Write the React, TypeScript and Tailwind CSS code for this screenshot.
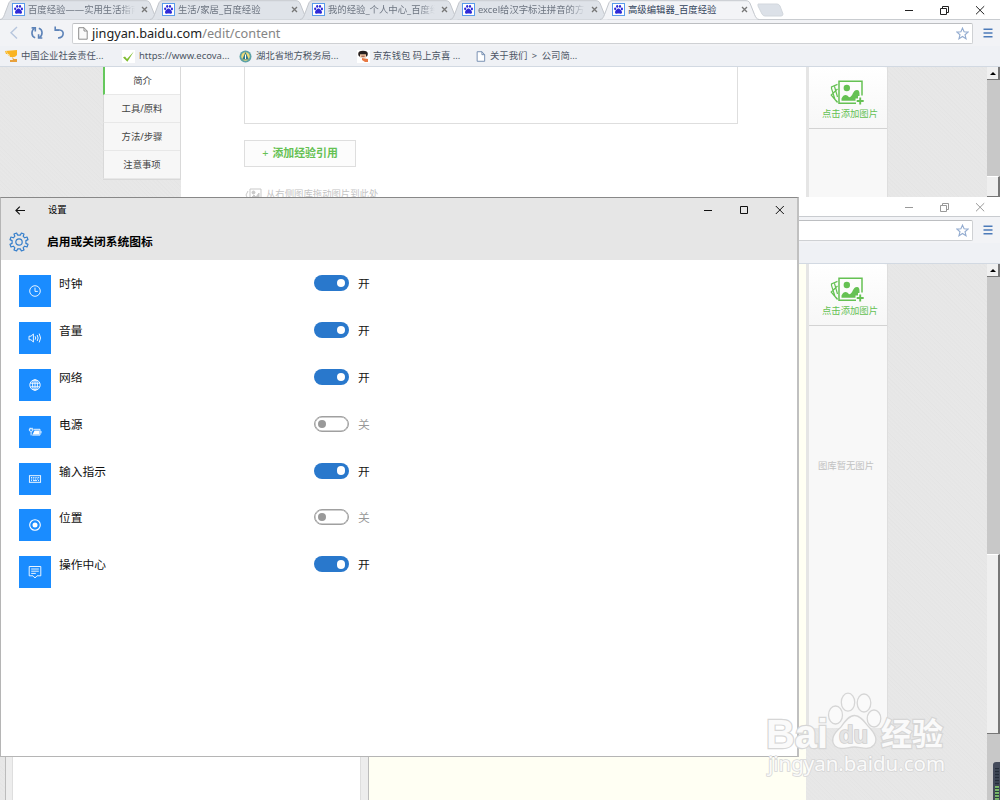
import type { ReactNode } from "react";

type Setting = {
  key: string;
  label: string;
  on: boolean;
  icon: ReactNode;
};

const TABS = ["百度经验——实用生活指南", "生活/家居_百度经验", "我的经验_个人中心_百度经验", "excel给汉字标注拼音的方法", "高级编辑器_百度经验"];

const NAV = ["简介", "工具/原料", "方法/步骤", "注意事项"];

const SETTINGS: Setting[] = [
  {
    key: "clock",
    label: "时钟",
    on: true,
    icon: (
      <>
        <circle cx="8" cy="8" r="5.3" />
        <path d="M8 4.6V8.4H10.8" />
      </>
    ),
  },
  {
    key: "volume",
    label: "音量",
    on: true,
    icon: (
      <>
        <path d="M2 6.2H4L6.4 4V12L4 9.8H2Z" />
        <path d="M8.2 6.3Q9.3 8 8.2 9.7M10.2 5Q12 8 10.2 11M12.2 3.6Q15 8 12.2 12.4" />
      </>
    ),
  },
  {
    key: "network",
    label: "网络",
    on: true,
    icon: (
      <>
        <circle cx="8" cy="8" r="5.2" />
        <ellipse cx="8" cy="8" rx="2.4" ry="5.2" />
        <path d="M8 2.8V13.2M3.3 6.2H12.7M3.3 9.8H12.7" />
      </>
    ),
  },
  {
    key: "power",
    label: "电源",
    on: false,
    icon: (
      <>
        <path d="M6.5 5.3H13V11.1H5.2M14 7V9.4" />
        <path d="M5.6 10.4L7.5 6.4H12.4V10.4Z" fill="white" stroke="none" />
        <path d="M2.4 4.9H5.8V6.7Q4.1 8.4 2.4 6.7ZM3.2 3.7V5M5 3.7V5M4.1 7.8V11.4" />
      </>
    ),
  },
  {
    key: "input",
    label: "输入指示",
    on: true,
    icon: (
      <>
        <rect x="2.4" y="4.7" width="11.2" height="6.6" />
        <path d="M4 6.5H12.2" strokeDasharray="1 .8" />
        <path d="M4 8H12.2" strokeDasharray="1.2 .7" />
        <path d="M4 9.6H5M6 9.6H10M11 9.6H12" />
      </>
    ),
  },
  {
    key: "location",
    label: "位置",
    on: false,
    icon: (
      <>
        <circle cx="8" cy="8" r="5.3" strokeWidth="1.1" />
        <circle cx="8" cy="8" r="2.5" fill="white" stroke="none" />
      </>
    ),
  },
  {
    key: "action",
    label: "操作中心",
    on: true,
    icon: (
      <>
        <path d="M2.2 2.5H13.8V11.8H10L8 14L6 11.8H2.2Z" />
        <path d="M4.2 5H11.8M4.2 7.2H11.8M4.2 9.4H8.8" />
      </>
    ),
  },
];

function PawIcon() {
  return (
    <svg viewBox="0 0 13 13" className="h-[13px] w-[13px] shrink-0">
      <rect x=".5" y=".5" width="12" height="12" fill="#fff" stroke="#5b9bea" />
      <g fill="#2f2bd8">
        <ellipse cx="3.2" cy="5.8" rx="1.1" ry="1.4" />
        <ellipse cx="5.2" cy="3.4" rx="1.1" ry="1.4" />
        <ellipse cx="8" cy="3.4" rx="1.1" ry="1.4" />
        <ellipse cx="9.9" cy="5.9" rx="1.1" ry="1.4" />
        <path d="M6.5 5.6C8 5.6 10 8.2 10 9.3C10 11.4 7.6 10.6 6.5 10.6S3 11.4 3 9.3C3 8.2 5 5.6 6.5 5.6Z" />
      </g>
    </svg>
  );
}

function Tab({ title, active }: { title: string; active: boolean }) {
  return (
    <div className="relative h-5 w-[150px] shrink-0">
      <svg viewBox="0 0 160 20" className="absolute top-0 left-0 h-5 w-40">
        <path
          d="M0 19.5C3 19 3.5 17 4.5 14.5L8.5 4C9.3 1.8 10 .7 12 .7H146C148.5 .7 149.5 2 150.3 4L154.5 14.5C155.5 17 156.5 19 159 19.5"
          fill={active ? "#f3f4f7" : "#dfe3e9"}
          stroke="#c3c7cd"
          strokeWidth="1"
        />
      </svg>
      <div className="relative flex h-5 items-center pl-[12px]">
        <PawIcon />
        <span
          className={
            "ml-[3px] w-[107px] overflow-hidden text-[9.37px] leading-5 whitespace-nowrap " +
            (active ? "text-[#34445c]" : "mask-r-from-85% text-[#6c7480]")
          }
        >
          {title}
        </span>
        <svg viewBox="0 0 7 7" className="ml-[6px] h-[7px] w-[7px]">
          <path d="M1 1L6 6M6 1L1 6" stroke="#777" strokeWidth="1.3" />
        </svg>
      </div>
    </div>
  );
}

function WindowButtons({ color }: { color: string }) {
  return (
    <svg viewBox="0 0 84 12" className="mr-[13px] h-3 w-[84px]" fill="none" stroke={color}>
      <path d="M2 6.5H10" />
      <path d="M37.5 4.5H43.5V10.5H37.5ZM39.5 4.5V2.5H45.5V8.5H43.5" />
      <path d="M73 2.2L81.2 10.3M81.2 2.2L73 10.3" />
    </svg>
  );
}

function Toolbar({ url }: { url?: boolean }) {
  return (
    <div className="flex h-[27px] items-center border-t border-[#c9ccd0] bg-[#f2f3f6]">
      <svg viewBox="0 0 72 20" className="h-5 w-[72px] shrink-0" fill="none">
        <path d="M17 4L11 9.7L17 15.5" stroke="#b7c6dd" strokeWidth="1.4" />
        <g stroke="#5d83b8" strokeWidth="1.6">
          <path d="M35.2 14.7C31 13.5 31 7.5 34.4 5.3M38.8 5.2C43 6.5 43 12.2 39.4 14.7" />
          <path d="M31.6 4.9H35.3V8.6M42.3 15H38.6V11.3" />
          <path d="M55.4 7H59.6C64.6 7 64.6 14.8 58 15" />
          <path d="M55.2 3.6V7.2H59" />
        </g>
      </svg>
      <div className="flex h-[21px] w-[901px] items-center rounded-[2px] border border-[#cfd1d4] border-t-[#bcbec1] bg-white">
        {url && (
          <>
            <svg viewBox="0 0 10 13" className="ml-[5px] h-[13px] w-[10px]" fill="#fafafa" stroke="#8d8d8d">
              <path d="M.7 .7H6L9.2 4V12.2H.7ZM6 .7V4H9.2" />
            </svg>
            <span className="-mt-px ml-1 text-[12.72px] leading-5 text-[#222]">
              jingyan.baidu.com<span className="text-[#858585]">/edit/content</span>
            </span>
          </>
        )}
        <svg viewBox="0 0 14 14" className="mr-[3px] ml-auto h-[13px] w-[13px]" fill="none" stroke="#93acd0">
          <path d="M7 1.2L8.7 5.2L13 5.5L9.7 8.3L10.8 12.6L7 10.2L3.2 12.6L4.3 8.3L1 5.5L5.3 5.2Z" strokeWidth="1.2" />
        </svg>
      </div>
      <svg viewBox="0 0 10 10" className="ml-[10px] h-[10px] w-[10px]" stroke="#4c7bb9" strokeWidth="1.5">
        <path d="M.5 1.2H9.5M.5 5H9.5M.5 8.8H9.5" />
      </svg>
    </div>
  );
}

function Bookmarks() {
  return (
    <div className="flex h-[20px] items-center bg-[#eff1f5] text-[9.37px] whitespace-nowrap text-[#4c5564]">
      <div className="flex w-[117px] items-center gap-[2px] pl-[5px]">
        <svg viewBox="0 0 14 14" className="h-[14px] w-[14px]">
          <path d="M0 2L12 1V6C10 9 7 8 5 8L4 5L1 5Z" fill="#f9b423" />
          <path d="M7 8L9 10H12V13H5V11L8 11Z" fill="#e8a13c" />
          <path d="M1 2L4 7" stroke="#fbd778" />
        </svg>
        中国企业社会责任...
      </div>
      <div className="flex w-[122px] items-center gap-1 pl-[5px]">
        <svg viewBox="0 0 13 13" className="h-[13px] w-[13px]">
          <rect width="13" height="13" fill="#fff" />
          <path d="M1 7.5L3 6.5L5 9L11.8 1.6L5.4 11.8Z" fill="#7fbd2f" />
        </svg>
        <span className="text-[9.5px]">https://www.ecova...</span>
      </div>
      <div className="flex w-[118px] items-center gap-1">
        <svg viewBox="0 0 13 13" className="h-[13px] w-[13px]">
          <circle cx="6.5" cy="6.5" r="6" fill="#5ba1a6" />
          <circle cx="6.5" cy="6.5" r="4.2" fill="#eedb78" />
          <path d="M6.5 2L9.8 9.5H3.2Z" fill="#2c7889" />
          <path d="M6.5 4.5V9" stroke="#fff" />
        </svg>
        湖北省地方税务局...
      </div>
      <div className="flex w-[119px] items-center gap-[3px]">
        <svg viewBox="0 0 13 13" className="h-[13px] w-[13px]">
          <rect width="13" height="13" fill="#fff" />
          <ellipse cx="6" cy="4" rx="4.8" ry="3.3" fill="#29201e" />
          <path d="M3 4.3H9V7.6H3Z" fill="#f4cca5" />
          <path d="M4.3 6.2H7.7" stroke="#8e4338" />
          <path d="M5 8L11 9V12H8L5 10Z" fill="#e87843" />
        </svg>
        京东钱包 码上京喜 ...
      </div>
      <div className="flex items-center gap-1">
        <svg viewBox="0 0 10 12" className="h-[11px] w-[10px]" fill="#fff" stroke="#6e89ad">
          <path d="M.8 .8H6L9 4V11.2H.8ZM6 .8V4H9" />
        </svg>
        <span className="[word-spacing:2px]">关于我们 &gt; 公司简...</span>
      </div>
    </div>
  );
}

function PicturesIcon() {
  return (
    <svg viewBox="0 0 34 25" className="h-[25px] w-[34px]" fill="none" stroke="#65c153">
      <path d="M7.5 4.4L1.5 7V8.5L5 19.5L7.5 22M4.5 6.5L7.5 17M7.5 9L1.2 15L7.5 22.5" strokeWidth="1.2" />
      <path d="M26 23.2H9V1.2H32V15.5" strokeWidth="1.5" />
      <circle cx="16.8" cy="8" r="3.2" fill="#65c153" stroke="none" />
      <path d="M11.5 20.8V18.5C13.5 14.5 16.5 14 19 17.2C23 17.2 22.5 10 27 10C29 10 29.5 12 29.5 14V16H28L28 18.5H25.5V20.8Z" fill="#65c153" stroke="none" />
      <path d="M30.2 17.5V24.5M26.7 21H33.7" strokeWidth="1.9" />
    </svg>
  );
}

function Gallery({ empty }: { empty?: boolean }) {
  return (
    <div className="flex h-full w-[82px] flex-col border-r border-[#dedede] border-l-[3px] border-l-[#e5e5e5] bg-[#f8f8f8] text-[9.37px]">
      <div className="flex h-[62px] shrink-0 flex-col items-center rounded-tr-[4px] border-b border-[#d3d3d3] bg-linear-to-b from-white to-[#f7f7f7] pt-[13px] pl-1 text-[#65c153]">
        <div className="mr-[6px] h-[25px]">
          <PicturesIcon />
        </div>
        <span className="mt-[2px] leading-[13px]">点击添加图片</span>
      </div>
      {empty && <p className="mt-[133px] pr-1 text-center leading-[14px] text-[#c2c2c2]">图库暂无图片</p>}
    </div>
  );
}

function Scrollbar({ thumb }: { thumb: string }) {
  return (
    <div className="flex w-[13px] shrink-0 flex-col bg-[#c8c8c8]">
      <div className="flex h-[13px] shrink-0 items-center justify-center border-r-2 border-b border-[#777] bg-[#f0f0f0]">
        <svg viewBox="0 0 6 3" className="h-[3px] w-[6px]">
          <path d="M0 3L3 0L6 3Z" fill="#000" />
        </svg>
      </div>
      <div className={"border-t border-r-2 border-b border-t-white border-r-[#777] border-b-[#777] bg-[#efefef] " + thumb} />
    </div>
  );
}

const TEXTURE =
  "bg-[#e6e6e6] bg-[repeating-linear-gradient(45deg,#e4e4e4_0px,#e8e8e8_1px,#e6e6e6_3px)]";

function EditorWindow() {
  return (
    <section className="flex h-[197px] flex-col overflow-hidden">
      <div className="flex h-[19px] shrink-0 items-center justify-between bg-white">
        <div className="flex h-5">
          {TABS.map((t, i) => (
            <Tab key={t} title={t} active={i === TABS.length - 1} />
          ))}
          <svg viewBox="0 0 27 14" className="mt-[3px] ml-[7px] h-[14px] w-[27px]">
            <path d="M1 1H20Q22 1 23 3L26 11Q26 13 24 13H8Q6 13 5 11L1 3Z" fill="#dce1e8" stroke="#d2d7dd" />
          </svg>
        </div>
        <WindowButtons color="#222" />
      </div>
      <Toolbar url />
      <Bookmarks />
      <div className={"flex min-h-0 flex-1 border-t border-[#d2d9e2] " + TEXTURE}>
        <nav className="ml-[103px] h-[113px] w-[78px] shrink-0 border-r border-b border-[#d9d9d9] text-[9.37px] text-[#444]">
          {NAV.map((n, i) => (
            <div
              key={n}
              className={
                "flex h-[28px] items-center justify-center border-b border-[#e8e8e8] " +
                (i === 0 ? "border-l-2 border-l-[#65c85c] bg-white pt-px" : "border-l border-l-[#d9d9d9] bg-[#f7f7f7] pt-px")
              }
            >
              {n}
            </div>
          ))}
        </nav>
        <main className="w-[625px] shrink-0 bg-white pl-[63px]">
          <div className="h-[57px] w-[494px] border border-t-0 border-[#dedede]" />
          <button
            type="button"
            className="mt-[16px] flex h-[27px] w-[112px] items-center justify-center gap-1 border border-[#dedede] bg-[#fcfcfc] text-[10.9px] font-bold text-[#65c153]"
          >
            <span className="font-normal">+</span>添加经验引用
          </button>
          <div className="mt-[20px] flex items-center gap-1 pl-px text-[9.37px] leading-[14px] text-[#c4c4c4]">
            <svg viewBox="0 0 17 13" className="h-[13px] w-[17px]" fill="none" stroke="#c9c9c9">
              <path d="M5 1H16V12H5ZM3 3L1 7L3 11" />
              <circle cx="8.5" cy="4.5" r="1.5" fill="#c9c9c9" />
              <path d="M6 10L9 7L11 9L14 5V10Z" fill="#c9c9c9" />
            </svg>
            从右侧图库拖动图片到此处
          </div>
        </main>
        <Gallery />
        <div className="flex-1" />
        <Scrollbar thumb="mt-[96px] h-[40px]" />
      </div>
    </section>
  );
}

function BackgroundWindow() {
  return (
    <section className="flex h-[603px] flex-col">
      <div className="flex h-[19px] shrink-0 items-center justify-end bg-white">
        <WindowButtons color="#999" />
      </div>
      <Toolbar />
      <div className="h-[21px] shrink-0 border-b border-[#d2d9e2] bg-[#eff1f5]" />
      <div className={"flex min-h-0 flex-1 " + TEXTURE}>
        <div className="ml-[5px] w-[364px] border-x border-[#bcbcbc] bg-[#ededed] pr-[7px] pl-[6px]">
          <div className="h-full border-x border-[#dedede] bg-white" />
        </div>
        <div className="w-[437px] bg-[#fffff3]" />
        <div className="h-[464px]">
          <Gallery empty />
        </div>
        <div className="flex-1" />
        <Scrollbar thumb="mt-[277px] h-[180px]" />
      </div>
    </section>
  );
}

function Toggle({ on }: { on: boolean }) {
  return (
    <div
      className={
        "flex h-4 w-[35px] items-center rounded-full " +
        (on ? "justify-end bg-[#2978cc] pr-[4px]" : "border-[1.5px] border-[#a0a0a0] bg-white pl-[2.5px] shadow-[inset_0_0_0_.5px_#a0a0a0]")
      }
    >
      <span className={on ? "size-[8.5px] rounded-full bg-white" : "size-[8px] rounded-full bg-[#999]"} />
    </div>
  );
}

function SettingsWindow() {
  return (
    <section className="absolute top-[197px] left-0 flex h-[560px] w-[799px] flex-col border border-t-[1.5px] border-r-2 border-[#b5b5b5] border-t-[#888] border-r-[#c0c0c0] bg-white">
      <header className="h-[62px] shrink-0 bg-[#e6e6e6] text-black">
        <div className="flex h-6 items-center pl-[14px]">
          <svg viewBox="0 0 10 9" className="h-[9px] w-[10px]" fill="none" stroke="#111" strokeWidth="1.1">
            <path d="M10 4.5H1M4.8 .6L.9 4.5L4.8 8.4" />
          </svg>
          <span className="ml-[23px] text-[9.37px]">设置</span>
          <svg viewBox="0 0 82 10" className="mr-[12px] ml-auto h-[10px] w-[82px]" fill="none" stroke="#111">
            <path d="M1 5.5H9M37.5 1.5H44.5V8.5H37.5Z" />
            <path d="M72.8 1L80.8 9M80.8 1L72.8 9" />
          </svg>
        </div>
        <div className="flex h-[40px] items-center pl-2">
          <svg viewBox="0 0 20 20" className="h-5 w-5" fill="none" stroke="#347ecb" strokeWidth="1.2">
            <path
              d="M8.6 3.1L7.6 1L5 2L5.8 4.3L4.3 5.8L2 5L1 7.6L3.1 8.6V11.4L1 12.4L2 15L4.3 14.2L5.8 15.7L5 18L7.6 19L8.6 16.9H11.4L12.4 19L15 18L14.2 15.7L15.7 14.2L18 15L19 12.4L16.9 11.4V8.6L19 7.6L18 5L15.7 5.8L14.2 4.3L15 2L12.4 1L11.4 3.1Z"
              strokeLinejoin="round"
            />
            <circle cx="10" cy="10" r="3.2" />
          </svg>
          <h1 className="ml-[18px] text-[11.75px] font-bold">启用或关闭系统图标</h1>
        </div>
      </header>
      <ul className="pt-[15px] pl-[18px]">
        {SETTINGS.map((s) => (
          <li key={s.key} className="flex h-[46.9px] items-start text-[11.75px] leading-4 text-[#111]">
            <div className="flex size-[32px] items-center justify-center bg-[#1a8cff]">
              <svg viewBox="0 0 16 16" className="size-4" fill="none" stroke="white" strokeWidth=".9">
                {s.icon}
              </svg>
            </div>
            <span className="ml-[8px] w-[255px]">{s.label}</span>
            <Toggle on={s.on} />
            <span className={s.on ? "ml-[9px]" : "ml-[9px] text-[#999]"}>{s.on ? "开" : "关"}</span>
          </li>
        ))}
      </ul>
    </section>
  );
}

function Watermark() {
  return (
    <svg
      viewBox="0 0 190 90"
      className="pointer-events-none absolute top-[690px] left-[762px] h-[90px] w-[190px]"
      fill="#fafafa"
      stroke="#d6d6d6"
      strokeWidth="1.3"
    >
      <g>
        <ellipse cx="73.5" cy="25" rx="7" ry="9" />
        <ellipse cx="86" cy="12.2" rx="6.7" ry="9" />
        <ellipse cx="102" cy="13" rx="6.8" ry="9" />
        <ellipse cx="112" cy="28.5" rx="6.8" ry="8.5" />
        <path d="M92.5 25.5C98 25.5 102 31 106 36C113 43 116 50 112 55C107 61 99 57 92.5 57C85 57 79 61 73 56C68 50 72 43 79 37C83 31 87 25.5 92.5 25.5Z" />
      </g>
      <g className="font-['Liberation_Sans','Noto_Sans_CJK_SC',sans-serif] font-bold" paintOrder="stroke" strokeWidth="2.4">
        <text x="4" y="58" fontSize="41" textLength="62" lengthAdjust="spacingAndGlyphs">Bai</text>
        <text x="77" y="53" fontSize="24" textLength="29" lengthAdjust="spacingAndGlyphs" fill="#e4e4e4" stroke="#cfcfcf" strokeWidth="1.6">du</text>
        <text x="119" y="55" fontSize="31">经验</text>
      </g>
      <text
        x="6"
        y="81"
        fontSize="20"
        textLength="177"
        lengthAdjust="spacingAndGlyphs"
        paintOrder="stroke"
        strokeWidth="1.6"
        className="font-['Noto_Sans',sans-serif]"
      >
        jingyan.baidu.com
      </text>
    </svg>
  );
}

export default function App() {
  return (
    <div className="relative h-[800px] w-[1000px] overflow-hidden bg-white font-['Noto_Sans','Noto_Sans_CJK_SC',sans-serif]">
      <EditorWindow />
      <BackgroundWindow />
      <SettingsWindow />
      <Watermark />
      {/* desktop meter gadget at the screen edge */}
      <div className="absolute top-[762px] left-[993px] flex h-[38px] w-[7px] flex-col justify-end rounded-tl-[3px] bg-[#454b5b] pt-1 pl-[2px]">
        <div className="h-[18px] w-[4px] bg-[repeating-linear-gradient(#252c39_0px,#252c39_1px,#3b4452_1px,#3b4452_3px)]" />
        <div className="h-[14px] w-[4px] bg-[repeating-linear-gradient(#8fb95c_0px,#62ad78_2px,#27433c_2px,#27433c_3px)]" />
      </div>
    </div>
  );
}
